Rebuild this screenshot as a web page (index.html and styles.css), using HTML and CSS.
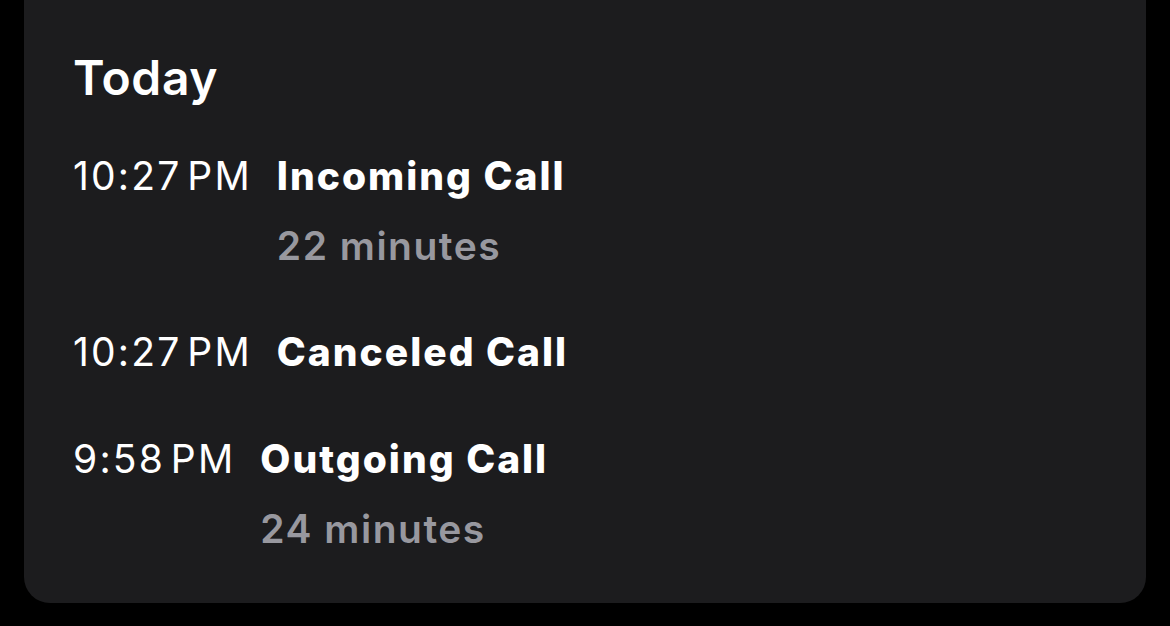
FILE: index.html
```html
<!DOCTYPE html>
<html lang="en">
<head>
<meta charset="utf-8">
<title>Call History</title>
<link rel="stylesheet" href="styles.css">
</head>
<body>
  <section class="card">
    <h2 class="card-title">Today</h2>
    <ul class="calls">
      <li class="call">
        <span class="call-time">10:27&#8202;PM</span>
        <div class="call-body">
          <div class="call-kind">Incoming Call</div>
          <div class="call-duration">22 minutes</div>
        </div>
      </li>
      <li class="call">
        <span class="call-time">10:27&#8202;PM</span>
        <div class="call-body">
          <div class="call-kind">Canceled Call</div>
        </div>
      </li>
      <li class="call">
        <span class="call-time">9:58&#8202;PM</span>
        <div class="call-body">
          <div class="call-kind">Outgoing Call</div>
          <div class="call-duration">24 minutes</div>
        </div>
      </li>
    </ul>
  </section>
</body>
</html>
```

FILE: styles.css
```css
html, body {
  margin: 0;
  padding: 0;
  background: #000;
}

body {
  width: 1170px;
  height: 626px;
  overflow: hidden;
  font-family: Inter, "Noto Sans", sans-serif;
  color: #fff;
}

.card {
  margin: -40px 0 0 24px;
  width: 1122px;
  box-sizing: border-box;
  padding: 90px 49px 52px;
  background: #1c1c1e;
  border-radius: 26px;
}

.card-title {
  margin: 0 0 47.5px;
  font-size: 48px;
  line-height: 56px;
  font-weight: 600;
  letter-spacing: 0.6px;
}

.calls {
  list-style: none;
  margin: 0;
  padding: 0;
  display: flex;
  flex-direction: column;
  gap: 62.5px;
}

.call {
  display: flex;
  gap: 25px;
  font-size: 39px;
  line-height: 44px;
}

.call-time {
  font-weight: 400;
  letter-spacing: 2.2px;
}

.call-kind {
  font-weight: 800;
  letter-spacing: 2px;
}

.call-duration {
  margin-top: 26px;
  font-weight: 600;
  letter-spacing: 1.5px;
  color: #98989f;
}
```
